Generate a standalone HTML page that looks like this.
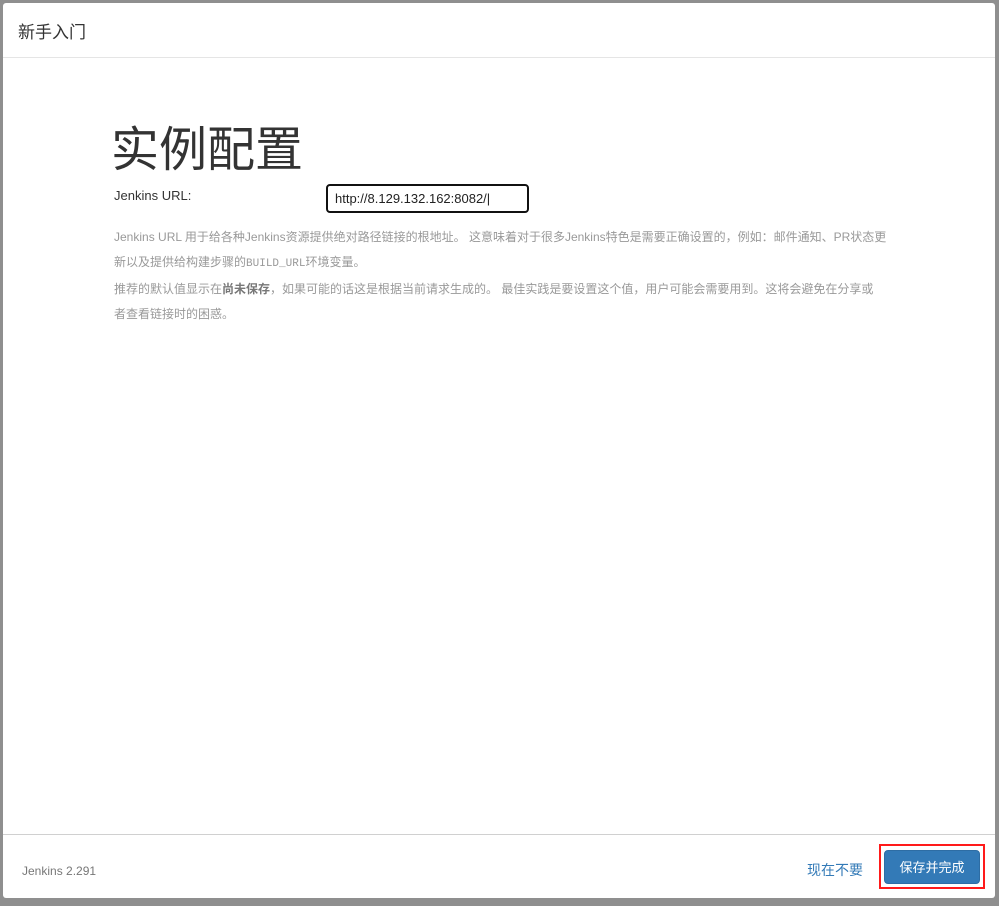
<!DOCTYPE html>
<html><head><meta charset="utf-8"><style>
html,body{margin:0;padding:0;width:999px;height:906px;background:#8f8f8f;overflow:hidden;font-family:"Liberation Sans","Noto Sans CJK SC",sans-serif}
.panel{position:absolute;left:3px;top:3px;width:992px;height:895px;background:#fff;border-radius:3px}
.hdr{position:absolute;left:0;top:0;width:992px;height:54px;border-bottom:1px solid #e5e5e5}
.hdr span{position:absolute;left:15px;top:15px;font-size:17px;color:#333}
h1{position:absolute;left:108px;top:113px;margin:0;font-size:48px;font-weight:normal;color:#333;line-height:70px}
.lbl{position:absolute;left:111px;top:185px;font-size:13px;color:#333}
.inp{position:absolute;left:323px;top:181px;width:192px;height:25px;border:2px solid #111;border-radius:4px;font-size:13px;color:#222;line-height:25px;padding-left:7px;box-sizing:content-box}
.desc{position:absolute;left:111px;top:222px;width:800px;font-size:12px;color:#999;line-height:25px;white-space:nowrap}
.desc b{color:#777;font-weight:bold}
.mono{font-family:"Liberation Mono",monospace;font-size:11px}
.ftr{position:absolute;left:0;top:831px;width:992px;height:64px;border-top:1px solid #d0d0d0}
.ver{position:absolute;left:19px;top:29px;font-size:12px;color:#777}
.skip{position:absolute;left:804px;top:25px;font-size:14px;color:#337ab7}
.red{position:absolute;left:876px;top:9px;width:102px;height:41px;border:2px solid #ff1a1a}
.btn{position:absolute;left:3px;top:4px;width:96px;height:34px;background:#337ab7;border:1px solid #2e6da4;border-radius:4px;color:#fff;font-size:13px;text-align:center;line-height:34px;box-sizing:border-box}
</style></head><body>
<div class="panel">
<div class="hdr"><span>新手入门</span></div>
<h1>实例配置</h1>
<div class="lbl">Jenkins URL:</div>
<div class="inp">http://8.129.132.162:8082/|</div>
<div class="desc">Jenkins URL 用于给各种Jenkins资源提供绝对路径链接的根地址。 这意味着对于很多Jenkins特色是需要正确设置的，例如：邮件通知、PR状态更<br>新以及提供给构建步骤的<span class="mono">BUILD_URL</span>环境变量。<br>推荐的默认值显示在<b>尚未保存</b>，如果可能的话这是根据当前请求生成的。 最佳实践是要设置这个值，用户可能会需要用到。这将会避免在分享或<br>者查看链接时的困惑。</div>
<div class="ftr">
<div class="ver">Jenkins 2.291</div>
<div class="skip">现在不要</div>
<div class="red"><div class="btn">保存并完成</div></div>
</div>
</div>
</body></html>
